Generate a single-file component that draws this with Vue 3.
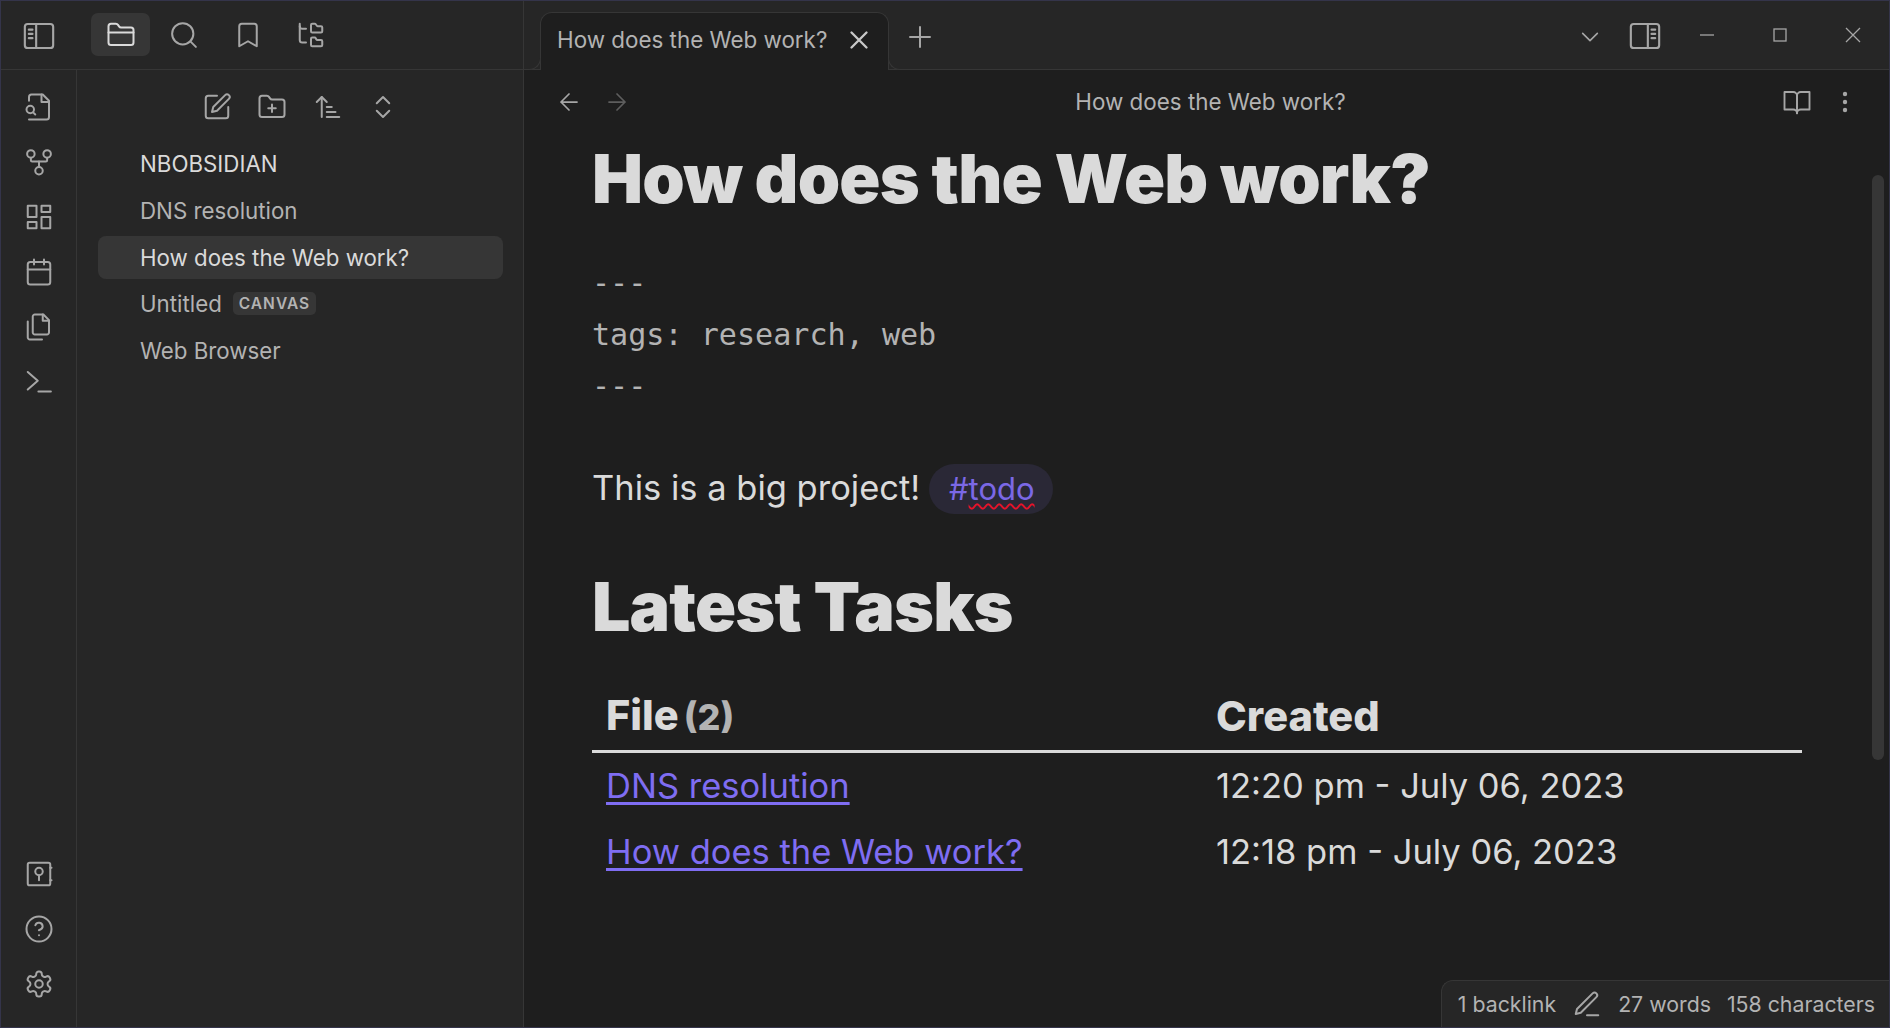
<template>
  <div class="window">
    <div class="left">
      <div class="left-top">
        <button class="toggle-btn">
          <svg class="ico big" viewBox="0 0 24 24"><rect x="2" y="3.5" width="20" height="17" rx="2"/><path d="M10 3.5v17M4.8 7.5h2.6M4.8 10.5h2.6M4.8 13.5h2.6"/></svg>
        </button>
        <div class="left-tabs">
          <button class="tab-btn active">
            <svg class="ico" viewBox="0 0 24 24"><path d="M4 20h16a2 2 0 0 0 2-2V8a2 2 0 0 0-2-2h-7.93a2 2 0 0 1-1.66-.9l-.82-1.2A2 2 0 0 0 7.93 3H4a2 2 0 0 0-2 2v13c0 1.1.9 2 2 2Z"/><path d="M2 10h20"/></svg>
          </button>
          <button class="tab-btn">
            <svg class="ico" viewBox="0 0 24 24"><circle cx="11" cy="11" r="8.5"/><path d="m21.5 21.5-4.4-4.4"/></svg>
          </button>
          <button class="tab-btn">
            <svg class="ico" viewBox="0 0 24 24"><path d="M19 21l-7-4-7 4V5a2 2 0 0 1 2-2h10a2 2 0 0 1 2 2z"/></svg>
          </button>
          <button class="tab-btn">
            <svg class="ico" viewBox="0 0 24 24"><path d="M20 10a1 1 0 0 0 1-1V6a1 1 0 0 0-1-1h-2.5a1 1 0 0 1-.8-.4l-.9-1.2A1 1 0 0 0 15 3h-2a1 1 0 0 0-1 1v5a1 1 0 0 0 1 1Z"/><path d="M20 21a1 1 0 0 0 1-1v-3a1 1 0 0 0-1-1h-2.9a1 1 0 0 1-.88-.55l-.42-.85a1 1 0 0 0-.92-.6H13a1 1 0 0 0-1 1v5a1 1 0 0 0 1 1Z"/><path d="M3 5a2 2 0 0 0 2 2h3"/><path d="M3 3v13a2 2 0 0 0 2 2h3"/></svg>
          </button>
        </div>
      </div>
      <div class="left-body">
        <div class="ribbon">
          <div class="ribbon-group">
            <button v-for="r in ribbonTop" :key="r.name" class="ribbon-btn">
              <svg class="ico" viewBox="0 0 24 24" v-html="r.svg"></svg>
            </button>
          </div>
          <div class="ribbon-group">
            <button v-for="r in ribbonBottom" :key="r.name" class="ribbon-btn">
              <svg class="ico" viewBox="0 0 24 24" v-html="r.svg"></svg>
            </button>
          </div>
        </div>
        <div class="files">
          <div class="nav-buttons">
            <button v-for="n in navButtons" :key="n.name" class="nav-btn">
              <svg class="ico" viewBox="0 0 24 24" v-html="n.svg"></svg>
            </button>
          </div>
          <div class="vault-name">NBOBSIDIAN</div>
          <div v-for="f in files" :key="f.name" class="file-row" :class="{ selected: f.selected }">
            <span>{{ f.name }}</span>
            <span v-if="f.tag" class="file-tag">{{ f.tag }}</span>
          </div>
        </div>
      </div>
    </div>

    <div class="main">
      <div class="tabbar">
        <div class="tab">
          <span class="tab-title">How does the Web work?</span>
          <svg class="ico close" viewBox="0 0 24 24"><path d="M18 6 6 18M6 6l12 12"/></svg>
        </div>
        <svg class="ico plus" viewBox="0 0 24 24"><path d="M12 4v16M4 12h16"/></svg>
        <div class="spacer"></div>
        <svg class="ico chev" viewBox="0 0 24 24"><path d="m4 8 8 8 8-8"/></svg>
        <svg class="ico big split" viewBox="0 0 24 24"><rect x="2" y="3.5" width="20" height="17" rx="2"/><path d="M14 3.5v17M16.6 7.5h2.6M16.6 10.5h2.6M16.6 13.5h2.6"/></svg>
        <div class="winctl">
          <svg class="win-ico" viewBox="0 0 16 16"><path d="M1 8h14"/></svg>
        </div>
        <div class="winctl">
          <svg class="win-ico" viewBox="0 0 16 16"><rect x="2" y="2" width="12" height="12"/></svg>
        </div>
        <div class="winctl">
          <svg class="win-ico" viewBox="0 0 16 16"><path d="m1 1 14 14M15 1 1 15"/></svg>
        </div>
      </div>

      <div class="view">
        <div class="view-header">
          <div class="view-nav">
            <svg class="ico nav-arrow" viewBox="0 0 24 24"><path d="M20 12H4M12 20l-8-8 8-8"/></svg>
            <svg class="ico nav-arrow faint" viewBox="0 0 24 24"><path d="M4 12h16M12 4l8 8-8 8"/></svg>
          </div>
          <div class="view-title">How does the Web work?</div>
          <div class="view-actions">
            <svg class="ico book" viewBox="0 0 24 24"><path d="M2 4h7a3 3 0 0 1 3 3v14a3 3 0 0 0-3-3H2z"/><path d="M22 4h-7a3 3 0 0 0-3 3v14a3 3 0 0 1 3-3h7z"/></svg>
            <svg class="more" viewBox="0 0 8 24"><circle cx="4" cy="4" r="2.2"/><circle cx="4" cy="12" r="2.2"/><circle cx="4" cy="20" r="2.2"/></svg>
          </div>
        </div>

        <div class="note">
          <h1>How does the Web work?</h1>
          <div class="frontmatter">
            <div>---</div>
            <div>tags: research, web</div>
            <div>---</div>
          </div>
          <p class="para">This is a big project! <span class="tag">#<span class="spell">todo</span></span></p>
          <h2>Latest Tasks</h2>
          <table class="tasks">
            <thead>
              <tr>
                <th class="col-file">File <span class="count">(2)</span></th>
                <th>Created</th>
              </tr>
            </thead>
            <tbody>
              <tr v-for="t in tasks" :key="t.file">
                <td><a class="link">{{ t.file }}</a></td>
                <td>{{ t.created }}</td>
              </tr>
            </tbody>
          </table>
        </div>

        <div class="scrollbar"></div>
        <div class="status">
          <span>1 backlink</span>
          <svg class="ico pen" viewBox="0 0 24 24"><path d="M12 21h9"/><path d="M16.5 3.5a2.12 2.12 0 0 1 3 3L7 19l-4 1 1-4Z"/></svg>
          <span>27 words</span>
          <span>158 characters</span>
        </div>
      </div>
    </div>
  </div>
</template>

<script setup>
const ribbonTop = [
  { name: 'switcher', svg: '<path d="M4 22h14a2 2 0 0 0 2-2V7l-5-5H6a2 2 0 0 0-2 2v3"/><path d="M14 2v6h6"/><circle cx="5" cy="14" r="3"/><path d="m9 18-1.5-1.5"/>' },
  { name: 'graph', svg: '<circle cx="12" cy="19" r="3"/><circle cx="5.5" cy="5.5" r="3"/><circle cx="18.5" cy="5.5" r="3"/><path d="M18.5 8.5v2c0 .6-.4 1-1 1h-11c-.6 0-1-.4-1-1v-2"/><path d="M12 11.5V16"/>' },
  { name: 'canvas', svg: '<rect x="3" y="3" width="7" height="9"/><rect x="14" y="3" width="7" height="5"/><rect x="14" y="12" width="7" height="9"/><rect x="3" y="16" width="7" height="5"/>' },
  { name: 'daily', svg: '<rect x="3" y="4" width="18" height="18" rx="2"/><path d="M16 2v4M8 2v4M3 10h18"/>' },
  { name: 'templates', svg: '<path d="M15.5 2H8.6c-.4 0-.8.2-1.1.5-.3.3-.5.7-.5 1.1v12.8c0 .4.2.8.5 1.1.3.3.7.5 1.1.5h9.8c.4 0 .8-.2 1.1-.5.3-.3.5-.7.5-1.1V6.5L15.5 2z"/><path d="M3 7.6v12.8c0 .4.2.8.5 1.1.3.3.7.5 1.1.5h9.8"/><path d="M15 2v5h5"/>' },
  { name: 'terminal', svg: '<path d="m3 18 8-7-8-7"/><path d="M11.5 19.5h10"/>' }
]

const ribbonBottom = [
  { name: 'vault', svg: '<rect x="3" y="3" width="18" height="18" rx="1.5"/><circle cx="12" cy="10" r="3"/><path d="M12 13v4M21 7h1M21 17h1"/>' },
  { name: 'help', svg: '<circle cx="12" cy="12" r="10"/><path d="M9.09 9a3 3 0 0 1 5.83 1c0 2-3 3-3 3"/><path d="M12 17h.01"/>' },
  { name: 'settings', svg: '<path d="M12.22 2h-.44a2 2 0 0 0-2 2v.18a2 2 0 0 1-1 1.73l-.43.25a2 2 0 0 1-2 0l-.15-.08a2 2 0 0 0-2.73.73l-.22.38a2 2 0 0 0 .73 2.73l.15.1a2 2 0 0 1 1 1.72v.51a2 2 0 0 1-1 1.74l-.15.09a2 2 0 0 0-.73 2.73l.22.38a2 2 0 0 0 2.73.73l.15-.08a2 2 0 0 1 2 0l.43.25a2 2 0 0 1 1 1.73V20a2 2 0 0 0 2 2h.44a2 2 0 0 0 2-2v-.18a2 2 0 0 1 1-1.73l.43-.25a2 2 0 0 1 2 0l.15.08a2 2 0 0 0 2.73-.73l.22-.39a2 2 0 0 0-.73-2.73l-.15-.08a2 2 0 0 1-1-1.74v-.5a2 2 0 0 1 1-1.74l.15-.09a2 2 0 0 0 .73-2.73l-.22-.38a2 2 0 0 0-2.73-.73l-.15.08a2 2 0 0 1-2 0l-.43-.25a2 2 0 0 1-1-1.73V4a2 2 0 0 0-2-2z"/><circle cx="12" cy="12" r="3"/>' }
]

const navButtons = [
  { name: 'new-note', svg: '<path d="M12 3H5a2 2 0 0 0-2 2v14a2 2 0 0 0 2 2h14a2 2 0 0 0 2-2v-7"/><path d="M18.5 2.5a2.12 2.12 0 0 1 3 3L12 15l-4 1 1-4Z"/>' },
  { name: 'new-folder', svg: '<path d="M4 20h16a2 2 0 0 0 2-2V8a2 2 0 0 0-2-2h-7.93a2 2 0 0 1-1.66-.9l-.82-1.2A2 2 0 0 0 7.93 3H4a2 2 0 0 0-2 2v13c0 1.1.9 2 2 2Z"/><path d="M12 10v6M9 13h6"/>' },
  { name: 'sort', svg: '<path d="m3 8 4-4 4 4"/><path d="M7 4v16"/><path d="M11 12h4M11 16h7M11 20h10"/>' },
  { name: 'collapse', svg: '<path d="m7 15 5 5 5-5"/><path d="m7 9 5-5 5 5"/>' }
]

const files = [
  { name: 'DNS resolution' },
  { name: 'How does the Web work?', selected: true },
  { name: 'Untitled', tag: 'CANVAS' },
  { name: 'Web Browser' }
]

const tasks = [
  { file: 'DNS resolution', created: '12:20 pm - July 06, 2023' },
  { file: 'How does the Web work?', created: '12:18 pm - July 06, 2023' }
]
</script>

<style>
html, body { margin: 0; background: #1e1e1e; }
</style>

<style scoped>
.window {
  width: 1890px;
  height: 1028px;
  box-sizing: border-box;
  display: flex;
  overflow: hidden;
  border: 1px solid #34344a;
  background: #1e1e1e;
  color: #dadada;
  font-family: Inter, "Noto Sans", sans-serif;
}
button {
  background: none;
  border: none;
  padding: 0;
  display: flex;
  align-items: center;
  justify-content: center;
}
.ico {
  width: 30px;
  height: 30px;
  fill: none;
  stroke: #a6a6a6;
  stroke-width: 1.6;
  stroke-linecap: round;
  stroke-linejoin: round;
  flex: none;
}
.ico.big { width: 34px; height: 34px; stroke-width: 1.5; }

/* kiri */
.left {
  width: 522px;
  flex: none;
  background: #262626;
  border-right: 1px solid #363636;
  display: flex;
  flex-direction: column;
}
.left-top {
  height: 69px;
  flex: none;
  box-sizing: border-box;
  border-bottom: 1px solid #363636;
  display: flex;
  align-items: flex-start;
  padding-top: 12px;
}
.toggle-btn { width: 76px; height: 46px; }
.left-tabs { display: flex; gap: 4.6px; margin-left: 14px; }
.tab-btn { width: 59px; height: 43px; border-radius: 7px; }
.tab-btn.active { background: #363636; }
.tab-btn.active .ico { stroke: #dadada; }
.left-body { flex: 1; display: flex; min-height: 0; }
.ribbon {
  width: 76px;
  flex: none;
  box-sizing: border-box;
  border-right: 1px solid #363636;
  display: flex;
  flex-direction: column;
  justify-content: space-between;
  padding: 13px 0 19px;
}
.ribbon-group { display: flex; flex-direction: column; gap: 7px; }
.ribbon-btn { width: 75px; height: 48px; }

.files { flex: 1; padding: 0 20px 0 21px; min-width: 0; }
.nav-buttons {
  display: flex;
  justify-content: center;
  gap: 11px;
  padding-top: 15px;
  margin-left: -1px;
}
.nav-btn { width: 44.5px; height: 44px; }
.vault-name {
  font-size: 22.3px;
  line-height: 43px;
  padding-left: 42px;
  margin: 13px 0 4.4px;
  color: #dadada;
}
.file-row {
  height: 43px;
  margin-top: 3.4px;
  padding-left: 42px;
  display: flex;
  align-items: center;
  gap: 11px;
  border-radius: 8px;
  font-size: 22.3px;
  color: #b3b3b3;
}
.file-row.selected { background: #363636; color: #dadada; }
.file-tag {
  font-size: 15.5px;
  font-weight: 600;
  letter-spacing: 1px;
  line-height: 23px;
  padding: 0 6px;
  background: #363636;
  border-radius: 5px;
  color: #b3b3b3;
}

/* kanan */
.main { flex: 1; display: flex; flex-direction: column; min-width: 0; }
.tabbar {
  height: 69px;
  flex: none;
  box-sizing: border-box;
  background: #262626;
  border-bottom: 1px solid #363636;
  display: flex;
  align-items: flex-start;
  padding-left: 16px;
}
.tab {
  position: relative;
  margin-top: 11px;
  width: 349px;
  height: 58px;
  box-sizing: border-box;
  padding: 0 14px 4px 16px;
  background: #1e1e1e;
  border: 1px solid #363636;
  border-bottom: none;
  border-radius: 12px 12px 0 0;
  display: flex;
  align-items: center;
  justify-content: space-between;
  z-index: 1;
}
.tab::before,
.tab::after {
  content: "";
  position: absolute;
  bottom: 0;
  width: 12px;
  height: 12px;
  box-sizing: content-box;
  background: #262626;
  border-bottom: 1px solid #363636;
}
.tab::before {
  left: -13px;
  border-right: 1px solid #363636;
  border-bottom-right-radius: 12px;
}
.tab::after {
  right: -13px;
  border-left: 1px solid #363636;
  border-bottom-left-radius: 12px;
}
.tab-title { font-size: 22.4px; color: #b3b3b3; white-space: nowrap; }
.ico.close { width: 30px; height: 30px; stroke: #c8c8c8; stroke-width: 1.9; }
.ico.plus { width: 30px; height: 30px; margin: 21px 0 0 16px; stroke-width: 1.6; }
.spacer { flex: 1; }
.ico.chev { width: 22px; height: 22px; margin: 25px 27px 0 0; stroke-width: 1.75; }
.ico.split { margin: 18px 8px 0 0; }
.winctl {
  width: 73px;
  height: 68px;
  box-sizing: border-box;
  display: flex;
  justify-content: center;
  padding-top: 26px;
}
.win-ico { width: 16px; height: 16px; fill: none; stroke: #a6a6a6; stroke-width: 1.3; }

.view { flex: 1; position: relative; min-height: 0; background: #1e1e1e; overflow: hidden; }
.view-header {
  height: 64px;
  box-sizing: border-box;
  display: flex;
  align-items: center;
  padding: 0 40px 1px 33px;
  position: relative;
}
.view-nav { display: flex; gap: 24px; width: 200px; }
.ico.nav-arrow { width: 24px; height: 24px; stroke-width: 1.75; }
.ico.nav-arrow.faint { stroke: #5e5e5e; }
.view-title {
  flex: 1;
  text-align: center;
  font-size: 22.4px;
  color: #b3b3b3;
  padding-left: 15px;
}
.view-actions { width: 200px; display: flex; justify-content: flex-end; align-items: center; gap: 29px; }
.ico.book { width: 30px; height: 30px; stroke-width: 1.5; }
.more { width: 8px; height: 24px; fill: #a6a6a6; }

.note { padding: 2px 87px 0 68px; }
h1 {
  margin: 0;
  font-size: 68px;
  line-height: 84px;
  font-weight: 900;
  letter-spacing: -0.85px;
  color: #dadada;
}
.frontmatter {
  margin-top: 37px;
  font-family: "DejaVu Sans Mono", "Liberation Mono", monospace;
  font-size: 30.1px;
  line-height: 51.5px;
  color: #b3b3b3;
}
.para {
  margin: 50.4px 0 0;
  font-size: 34.5px;
  line-height: 52px;
  color: #dadada;
}
.tag {
  display: inline-block;
  font-size: 31px;
  line-height: 50px;
  padding: 0 18px 0 20px;
  margin-left: -1px;
  border-radius: 25px;
  background: #2a2836;
  color: #7b68e6;
}
.spell { text-decoration: underline wavy #e6132a 2px; text-underline-offset: 3px; }
h2 {
  margin: 50px 0 0;
  font-size: 68px;
  line-height: 84px;
  font-weight: 900;
  letter-spacing: -0.85px;
  color: #dadada;
}
.tasks {
  width: 100%;
  margin-top: 37.3px;
  border-collapse: collapse;
  table-layout: fixed;
}
.tasks th {
  text-align: left;
  font-size: 41.5px;
  font-weight: 800;
  line-height: 52px;
  padding: 4px 14px 7px;
  border-bottom: 3px solid #dadada;
  color: #dadada;
}
.col-file { width: 582px; }
.count { font-size: 36px; color: #b3b3b3; font-weight: 800; margin-left: -4px; }
.tasks td {
  font-size: 34.5px;
  line-height: 52px;
  padding: 7px 14px;
  color: #dadada;
}
.link {
  color: #7f6df2;
  text-decoration: underline;
  text-decoration-thickness: 2.5px;
  text-underline-offset: 4px;
}

.scrollbar {
  position: absolute;
  right: 5px;
  top: 105px;
  width: 12px;
  height: 585px;
  background: #363636;
  border-radius: 6px;
}
.status {
  position: absolute;
  right: 0;
  bottom: 0;
  height: 47px;
  box-sizing: border-box;
  padding: 0 14px 0 16px;
  display: flex;
  align-items: center;
  gap: 16px;
  font-size: 21.3px;
  color: #b3b3b3;
  background: #262626;
  border: 1px solid #363636;
  border-width: 1px 0 0 1px;
  border-top-left-radius: 12px;
}
.ico.pen { width: 30px; height: 30px; stroke-width: 1.6; }
</style>
